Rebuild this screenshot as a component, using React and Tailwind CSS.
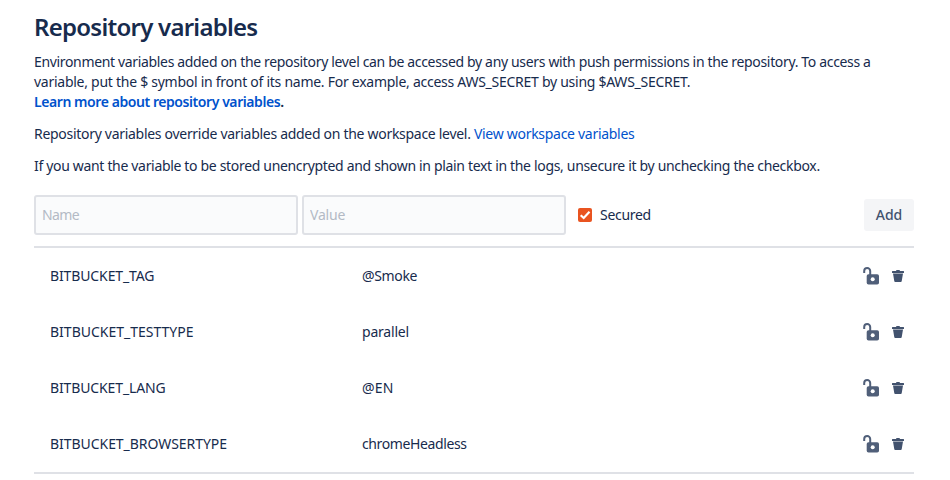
const variables = [
  { name: 'BITBUCKET_TAG', value: '@Smoke', nameFit: 'tracking-[-0.12px]', valueFit: 'tracking-[-0.35px]' },
  { name: 'BITBUCKET_TESTTYPE', value: 'parallel', nameFit: 'tracking-[0px]', valueFit: 'tracking-[-0.2px]' },
  { name: 'BITBUCKET_LANG', value: '@EN', nameFit: 'tracking-[-0.13px]', valueFit: 'tracking-[0.2px]' },
  { name: 'BITBUCKET_BROWSERTYPE', value: 'chromeHeadless', nameFit: 'tracking-[-0.05px]', valueFit: 'tracking-[-0.38px]' },
];

function UnlockIcon() {
  return (
    <svg width="17" height="18" viewBox="0 0 17 18" fill="none">
      <path d="M1.200 6V4a3 3 0 0 1 6 0v4" stroke="#505F79" strokeWidth="2" />
      <rect x="3.700" y="7.200" width="12.300" height="10.300" rx="1.800" fill="#505F79" />
      <circle cx="9.700" cy="12.200" r="2" fill="#fff" />
    </svg>
  );
}

function TrashIcon() {
  return (
    <svg width="12" height="12" viewBox="0 0 12 12" fill="#42526E">
      <path d="M4 1a1 1 0 0 1 1-1h2a1 1 0 0 1 1 1h3.500a.5.5 0 0 1 .5.5V3H0V1.500A.5.5 0 0 1 .5 1z" />
      <path d="M1 3.600h10l-1.300 7.600a1 1 0 0 1-1 .8H3.300a1 1 0 0 1-1-.8z" />
    </svg>
  );
}

export default function App() {
  return (
    <main className="h-[480px] w-[950px] overflow-hidden bg-white pl-[34px] font-['Noto_Sans',sans-serif] text-sm leading-5 text-[#172B4D]">
      <div className="w-[880px] pt-[13px]">
        <h1 className="text-2xl leading-7 font-semibold whitespace-nowrap">
          <span className="tracking-[-0.75px]">Repository variables</span>
        </h1>
        <p className="mt-[11px] whitespace-nowrap">
          <span className="tracking-[-0.34px]">Environment variables added on the repository level can be accessed by any users with push permissions in the repository. To access a</span>
          <br />
          <span className="tracking-[-0.265px]">variable, put the $ symbol in front of its name. For example, access AWS_SECRET by using $AWS_SECRET.</span>
          <br />
          <span className="font-semibold tracking-[-0.43px]"><a className="text-[#0052CC]">Learn more about repository variables</a>.</span>
        </p>
        <p className="mt-3 whitespace-nowrap">
          <span className="tracking-[-0.295px]">Repository variables override variables added on the workspace level. </span>
          <a className="tracking-[-0.29px] text-[#0052CC]">View workspace variables</a>
        </p>
        <p className="mt-3 whitespace-nowrap">
          <span className="tracking-[-0.326px]">If you want the variable to be stored unencrypted and shown in plain text in the logs, unsecure it by unchecking the checkbox.</span>
        </p>
        <form className="mt-[19px] flex h-10 items-center">
          <input placeholder="Name" className="h-10 w-[264px] rounded-[3px] border-2 border-[#DFE1E6] bg-[#FAFBFC] px-1.5 pb-0.5 tracking-[-0.6px] placeholder:text-[#B3BAC5]" />
          <input placeholder="Value" className="ml-1 h-10 w-[264px] rounded-[3px] border-2 border-[#DFE1E6] bg-[#FAFBFC] px-1.5 pb-0.5 tracking-[-0.2px] placeholder:text-[#B3BAC5]" />
          <label className="ml-3 flex items-center">
            <svg width="14" height="14" viewBox="0 0 14 14" fill="none">
              <rect width="14" height="14" rx="2" fill="#E95420" />
              <path d="m2.700 7.200 3 2.800L11.500 3.800" stroke="#fff" strokeWidth="2.200" />
            </svg>
            <span className="ml-2 tracking-[-0.3px]">Secured</span>
          </label>
          <button type="button" className="ml-auto h-8 w-[50px] rounded-[3px] bg-[#F4F5F7] font-medium text-[#42526E]">Add</button>
        </form>
        <ul className="mt-[11px] border-y-2 border-[#DFE1E6]">
          {variables.map((v) => (
            <li key={v.name} className="flex h-14 items-center pl-4">
              <span className="w-[312px]"><span className={v.nameFit}>{v.name}</span></span>
              <span className={v.valueFit}>{v.value}</span>
              <span className="mr-2.5 ml-auto flex items-center gap-3">
                <UnlockIcon />
                <TrashIcon />
              </span>
            </li>
          ))}
        </ul>
      </div>
    </main>
  );
}
